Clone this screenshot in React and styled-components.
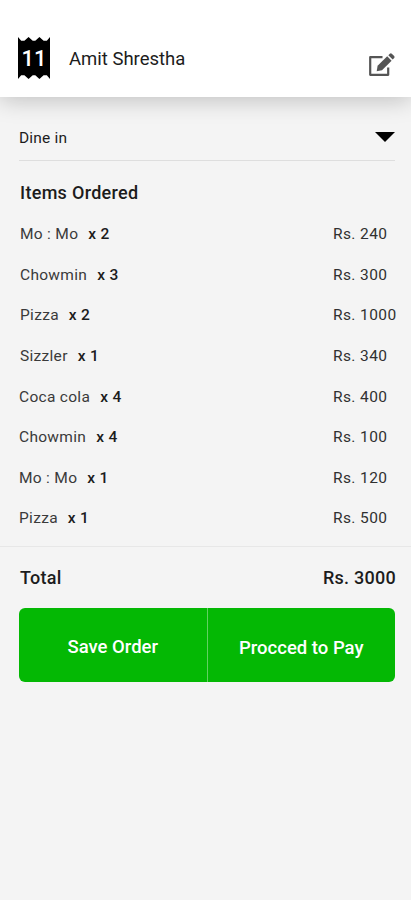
import React from "react";
import styled, { createGlobalStyle } from "styled-components";

const GlobalStyle = createGlobalStyle`
  * {
    box-sizing: border-box;
  }

  body {
    margin: 0;
    background-color: #f4f4f4;
    font-family: Roboto, "Liberation Sans", sans-serif;
    color: #1c1c1c;
  }
`;

const Container = styled.div`
  min-height: 900px;
  background-color: #f4f4f4;
`;

const Header = styled.header`
  display: flex;
  align-items: center;
  height: 97px;
  padding: 19px 15px 0 18px;
  background-color: #ffffff;
  box-shadow: 0 3px 22px rgba(0, 0, 0, 0.22);
`;

const TableTag = styled.div`
  display: flex;
  align-items: center;
  justify-content: center;
  width: 32px;
  height: 42px;
  background-color: #000000;
  color: #ffffff;
  font-size: 22px;
  font-weight: 500;
  clip-path: polygon(
    0 0, 10% 9%, 20% 9%, 33% 0, 46% 9%, 54% 9%, 67% 0, 80% 9%, 90% 9%, 100% 0,
    100% 100%, 90% 91%, 80% 91%, 67% 100%, 54% 91%, 46% 91%, 33% 100%, 20% 91%, 10% 91%, 0 100%
  );
`;

const Customer = styled.h1`
  flex: 1;
  margin: 2px 0 0 19px;
  font-size: 18.5px;
  line-height: 22px;
  font-weight: 400;
`;

const EditButton = styled.button`
  display: flex;
  margin-top: 13px;
  padding: 0;
  border: none;
  background: none;
`;

const OrderType = styled.div`
  display: flex;
  align-items: center;
  justify-content: space-between;
  height: 64px;
  margin: 0 16px 0 19px;
  padding-top: 18px;
  border-bottom: 1px solid #dedede;
  font-size: 15.5px;
  letter-spacing: 0.2px;
`;

const Caret = styled.span`
  border-left: 10px solid transparent;
  border-right: 10px solid transparent;
  border-top: 10px solid #000000;
  margin-top: -2px;
`;

const Title = styled.h2`
  margin: 0;
  padding: 21px 20px 10px;
  font-size: 18px;
  line-height: 22px;
  font-weight: 500;
  letter-spacing: 0.3px;
`;

const ItemList = styled.ul`
  margin: 0;
  padding: 0 0 7px;
  list-style: none;
  border-bottom: 1px solid #e7e7e7;
`;

const Item = styled.li`
  display: flex;
  align-items: center;
  height: 40.6px;
  padding: 0 0 0 ${(props) => (props.$shifted ? "19px" : "20px")};
  font-size: 15.5px;
  letter-spacing: 0.3px;
`;

const Name = styled.span`
  color: #3a3a3a;
`;

const Quantity = styled.span`
  margin-left: 10px;
  font-weight: 500;
`;

const Price = styled.span`
  width: 78px;
  margin-left: auto;
  color: #303030;
  letter-spacing: 0.4px;
`;

const Total = styled.div`
  display: flex;
  align-items: center;
  justify-content: space-between;
  height: 61px;
  padding: 0 15px 0 20px;
  font-size: 18px;
  font-weight: 500;
  letter-spacing: 0.25px;
`;

const Actions = styled.div`
  display: flex;
  height: 74px;
  margin: 0 16px 0 19px;
  border-radius: 6px;
  overflow: hidden;
`;

const Action = styled.button`
  flex: 1;
  padding: ${(props) => (props.$divided ? "6px 0 0" : "4px 0 0")};
  border: none;
  border-left: ${(props) => (props.$divided ? "1px solid #62d162" : "none")};
  background-color: #04b804;
  color: #ffffff;
  font-family: inherit;
  font-size: 18.5px;
  font-weight: 500;
`;

const items = [
  { name: "Mo : Mo", quantity: 2, price: 240 },
  { name: "Chowmin", quantity: 3, price: 300 },
  { name: "Pizza", quantity: 2, price: 1000 },
  { name: "Sizzler", quantity: 1, price: 340 },
  { name: "Coca cola", quantity: 4, price: 400 },
  { name: "Chowmin", quantity: 4, price: 100 },
  { name: "Mo : Mo", quantity: 1, price: 120 },
  { name: "Pizza", quantity: 1, price: 500 },
];

function EditIcon() {
  return (
    <svg width="28" height="25" viewBox="0 0 28 25" fill="none">
      <path
        d="M14.5 5.2H2.2V22.8H20.2V15.5"
        stroke="#555555"
        strokeWidth="2.2"
        strokeLinejoin="round"
      />
      <path d="M8.7 19.3L9.6 13.8L19.2 4.3L23.6 8.7L14 18.2Z" fill="#555555" />
      <path
        d="M20.3 3.2L21.8 1.7Q22.8 .9 23.8 1.7L26.2 4.1Q27 5.1 26.2 6.1L24.7 7.6Z"
        fill="#555555"
      />
    </svg>
  );
}

function App() {
  return (
    <Container>
      <GlobalStyle />
      <Header>
        <TableTag>11</TableTag>
        <Customer>Amit Shrestha</Customer>
        <EditButton aria-label="Edit">
          <EditIcon />
        </EditButton>
      </Header>
      <OrderType>
        Dine in
        <Caret />
      </OrderType>
      <Title>Items Ordered</Title>
      <ItemList>
        {items.map((item, index) => (
          <Item key={index} $shifted={index > 3}>
            <Name>{item.name}</Name>
            <Quantity>x {item.quantity}</Quantity>
            <Price>Rs. {item.price}</Price>
          </Item>
        ))}
      </ItemList>
      <Total>
        <span>Total</span>
        <span>Rs. 3000</span>
      </Total>
      <Actions>
        <Action>Save Order</Action>
        <Action $divided>Procced to Pay</Action>
      </Actions>
    </Container>
  );
}

export default App;
